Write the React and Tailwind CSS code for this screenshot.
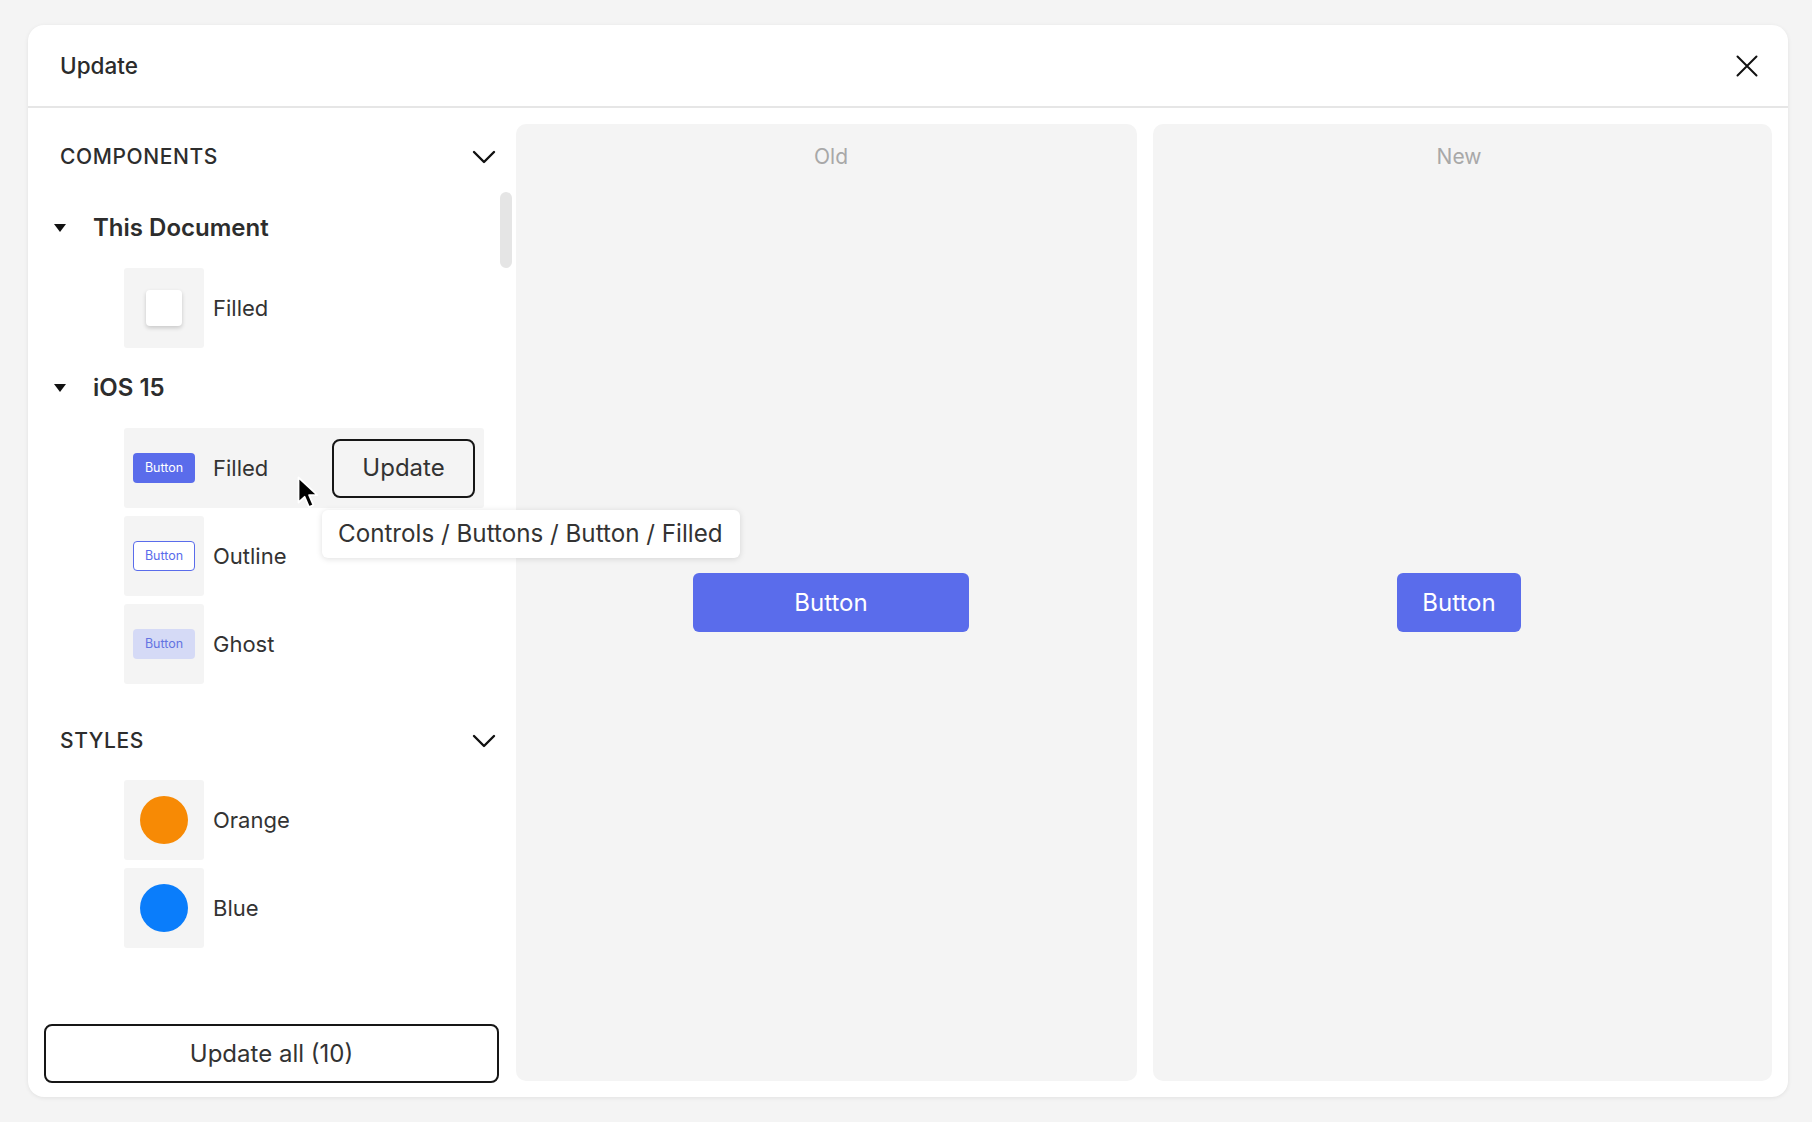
import React from "react";

function Chevron() {
  return (
    <svg width="24" height="14" viewBox="0 0 24 14" fill="none">
      <polyline points="2,2 12,12 22,2" stroke="#111" strokeWidth="2.4" strokeLinecap="round" strokeLinejoin="round" />
    </svg>
  );
}

function Caret() {
  return (
    <svg width="12" height="8" viewBox="0 0 12 8">
      <polygon points="0,0 12,0 6,8" fill="#111" />
    </svg>
  );
}

function CloseIcon() {
  return (
    <svg width="22" height="22" viewBox="0 0 22 22" fill="none">
      <path d="M1.5 1.5 L20.5 20.5 M20.5 1.5 L1.5 20.5" stroke="#111" strokeWidth="2" strokeLinecap="round" />
    </svg>
  );
}

function Pointer() {
  return (
    <svg width="24" height="34" viewBox="0 0 24 34">
      <path
        d="M1.5 1.5 L1.5 26.5 L7.6 20.8 L12 31 L16.4 29.1 L12.1 19.1 L20.4 19.1 Z"
        fill="#000"
        stroke="#fff"
        strokeWidth="1.8"
        strokeLinejoin="round"
      />
    </svg>
  );
}

function SectionHeader({ label }) {
  return (
    <div className="flex h-[60px] shrink-0 items-center justify-between pl-8 pr-[20px]">
      <span className="text-[21px] font-medium tracking-[0.6px] text-[#2d2d2d]">{label}</span>
      <Chevron />
    </div>
  );
}

function GroupHeader({ label, height }) {
  return (
    <div className={`flex shrink-0 items-center pl-[26px] ${height}`}>
      <Caret />
      <span className="ml-[27px] text-[24px] font-semibold text-[#2d2d2d]">{label}</span>
    </div>
  );
}

function Row({ thumb, label, className = "" }) {
  return (
    <div className={`ml-[96px] flex h-[80px] shrink-0 items-center ${className}`}>
      <div className="flex h-[80px] w-[80px] items-center justify-center rounded-[3px] bg-[#f4f4f4]">{thumb}</div>
      <span className="ml-[9px] text-[22px] text-[#333]">{label}</span>
    </div>
  );
}

function Chip({ variant }) {
  const base = "flex h-[30px] w-[62px] items-center justify-center rounded-[4px] text-[12.5px]";
  if (variant === "filled") return <div className={`${base} bg-[#5a6ceb] text-white`}>Button</div>;
  if (variant === "outline")
    return <div className={`${base} border border-[#5a6ceb] bg-white text-[#5a6ceb]`}>Button</div>;
  return <div className={`${base} bg-[#d5daf6] text-[#6474e2]`}>Button</div>;
}

export default function App() {
  return (
    <div className="min-h-screen w-full bg-[#f4f4f4] pb-[25px] pl-[28px] pt-[25px] font-['Inter','Noto_Sans',sans-serif]">
      <div className="flex h-[1072px] w-[1760px] flex-col rounded-[16px] bg-white shadow-[0_1px_4px_rgba(0,0,0,0.08)]">
        {/* title bar */}
        <div className="flex h-[83px] shrink-0 items-center justify-between border-b-2 border-[#e6e6e6] pl-8 pr-[30px]">
          <span className="pt-[1px] text-[22.5px] font-medium text-[#2b2b2b]">Update</span>
          <CloseIcon />
        </div>

        <div className="flex min-h-0 flex-1">
          {/* library list */}
          <div className="relative flex w-[488px] shrink-0 flex-col pb-[14px] pt-[19px]">
            <div className="absolute left-[472px] top-[84px] h-[76px] w-[12px] rounded-full bg-[#e5e5e5]" />

            <SectionHeader label="COMPONENTS" />
            <GroupHeader label="This Document" height="h-[81px]" />
            <Row
              label="Filled"
              thumb={<div className="h-[36px] w-[36px] rounded-[4px] bg-white shadow-[0_2px_4px_rgba(0,0,0,0.18)]" />}
            />
            <GroupHeader label="iOS 15" height="h-[80px]" />

            <div className="relative ml-[96px] flex h-[80px] w-[360px] shrink-0 items-center rounded-[3px] bg-[#f4f4f4]">
              <div className="flex h-[80px] w-[80px] items-center justify-center">
                <Chip variant="filled" />
              </div>
              <span className="ml-[9px] text-[22px] text-[#333]">Filled</span>
              <button className="ml-auto mr-[9px] flex h-[59px] w-[143px] items-center justify-center rounded-[8px] border-2 border-[#161616] text-[24px] text-[#333]">
                Update
              </button>
              <div className="absolute left-[173px] top-[48px]">
                <Pointer />
              </div>
              <div className="absolute left-[198px] top-[82px] z-10 flex h-[48px] items-center whitespace-nowrap rounded-[6px] bg-white pl-4 pr-[17px] text-[24.2px] text-[#333] shadow-[0_1px_6px_rgba(0,0,0,0.13)]">
                Controls / Buttons / Button / Filled
              </div>
            </div>
            <Row className="mt-2" label="Outline" thumb={<Chip variant="outline" />} />
            <Row className="mt-2" label="Ghost" thumb={<Chip variant="ghost" />} />

            <div className="mt-[27px]">
              <SectionHeader label="STYLES" />
            </div>
            <Row
              className="mt-[9px]"
              label="Orange"
              thumb={<div className="h-[48px] w-[48px] rounded-full bg-[#f78a05]" />}
            />
            <Row
              className="mt-2"
              label="Blue"
              thumb={<div className="h-[48px] w-[48px] rounded-full bg-[#0a7dfb]" />}
            />

            <button className="mx-4 mt-auto flex h-[59px] w-[455px] shrink-0 items-center justify-center rounded-[8px] border-2 border-[#161616] text-[24px] text-[#333]">
              Update all (10)
            </button>
          </div>

          {/* preview panes */}
          <div className="flex flex-1 gap-4 py-4 pr-4">
            <div className="grid flex-1 grid-rows-[64px_1fr_64px] rounded-[10px] bg-[#f4f4f4] pl-[9px]">
              <div className="flex items-center justify-center pt-[1px] text-[21px] text-[#a8a8a8]">Old</div>
              <div className="flex items-center justify-center">
                <div className="flex h-[59px] w-[276px] items-center justify-center rounded-[6px] bg-[#5a6ceb] text-[24px] text-white">
                  Button
                </div>
              </div>
              <div />
            </div>
            <div className="grid flex-1 grid-rows-[64px_1fr_64px] rounded-[10px] bg-[#f4f4f4] pr-[7px]">
              <div className="flex items-center justify-center pt-[1px] text-[21px] text-[#a8a8a8]">New</div>
              <div className="flex items-center justify-center">
                <div className="flex h-[59px] w-[124px] items-center justify-center rounded-[6px] bg-[#5a6ceb] text-[24px] text-white">
                  Button
                </div>
              </div>
              <div />
            </div>
          </div>
        </div>
      </div>
    </div>
  );
}
